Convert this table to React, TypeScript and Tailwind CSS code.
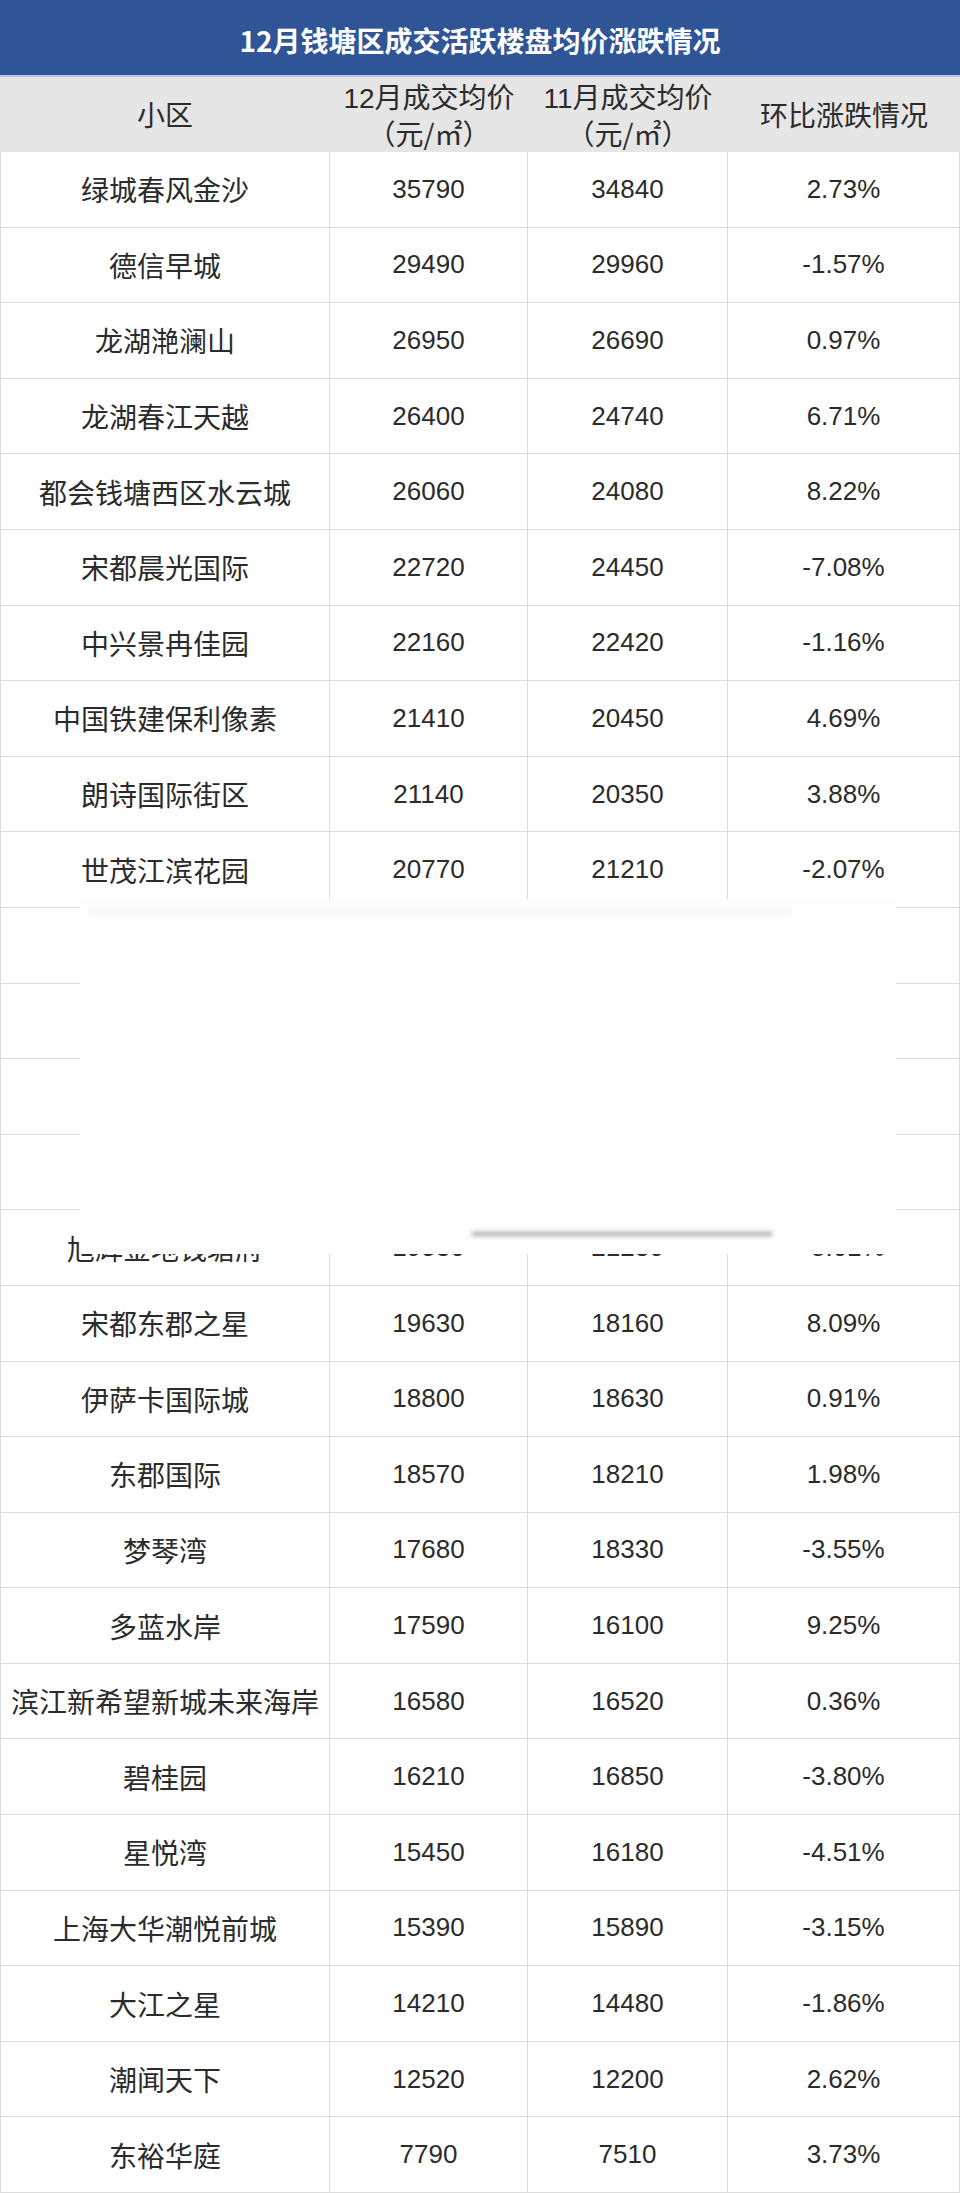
import React from 'react';

type Row = { name: string; dec: string; nov: string; change: string };

// 表格数据，按12月均价从高到低
const rows: Row[] = [
  { name: '绿城春风金沙', dec: '35790', nov: '34840', change: '2.73%' },
  { name: '德信早城', dec: '29490', nov: '29960', change: '-1.57%' },
  { name: '龙湖滟澜山', dec: '26950', nov: '26690', change: '0.97%' },
  { name: '龙湖春江天越', dec: '26400', nov: '24740', change: '6.71%' },
  { name: '都会钱塘西区水云城', dec: '26060', nov: '24080', change: '8.22%' },
  { name: '宋都晨光国际', dec: '22720', nov: '24450', change: '-7.08%' },
  { name: '中兴景冉佳园', dec: '22160', nov: '22420', change: '-1.16%' },
  { name: '中国铁建保利像素', dec: '21410', nov: '20450', change: '4.69%' },
  { name: '朗诗国际街区', dec: '21140', nov: '20350', change: '3.88%' },
  { name: '世茂江滨花园', dec: '20770', nov: '21210', change: '-2.07%' },
  { name: '', dec: '', nov: '', change: '' },
  { name: '', dec: '', nov: '', change: '' },
  { name: '', dec: '', nov: '', change: '' },
  { name: '', dec: '', nov: '', change: '' },
  { name: '旭辉金地钱塘府', dec: '19530', nov: '21230', change: '-8.01%' },
  { name: '宋都东郡之星', dec: '19630', nov: '18160', change: '8.09%' },
  { name: '伊萨卡国际城', dec: '18800', nov: '18630', change: '0.91%' },
  { name: '东郡国际', dec: '18570', nov: '18210', change: '1.98%' },
  { name: '梦琴湾', dec: '17680', nov: '18330', change: '-3.55%' },
  { name: '多蓝水岸', dec: '17590', nov: '16100', change: '9.25%' },
  { name: '滨江新希望新城未来海岸', dec: '16580', nov: '16520', change: '0.36%' },
  { name: '碧桂园', dec: '16210', nov: '16850', change: '-3.80%' },
  { name: '星悦湾', dec: '15450', nov: '16180', change: '-4.51%' },
  { name: '上海大华潮悦前城', dec: '15390', nov: '15890', change: '-3.15%' },
  { name: '大江之星', dec: '14210', nov: '14480', change: '-1.86%' },
  { name: '潮闻天下', dec: '12520', nov: '12200', change: '2.62%' },
  { name: '东裕华庭', dec: '7790', nov: '7510', change: '3.73%' },
];

const cjk = { fontFamily: '"Noto Sans CJK SC", "Noto Sans", sans-serif' };
const num = { fontFamily: '"Liberation Sans", Arial, "Noto Sans CJK SC", sans-serif' };

const cell = 'flex items-center justify-center border-r border-b border-[#dcdcdc] h-[75.6px] text-[#2b2b2b]';

export default function App() {
  return (
    <div className="relative w-[960px] bg-white">
      <div
        className="flex h-[75px] items-center justify-center bg-[#2f5597] pt-1 text-[28px] font-bold text-white"
        style={cjk}
      >
        12月钱塘区成交活跃楼盘均价涨跌情况
      </div>
      <div className="h-[2px] bg-[#b4c7e7]" />
      <div
        className="grid h-[75px] grid-cols-[330px_198px_200px_232px] bg-[#e7e6e6] text-[28px] leading-[35px] text-[#2b2b2b]"
        style={cjk}
      >
        <div className="flex items-center justify-center">小区</div>
        <div className="flex flex-col items-center justify-center">
          <span><span style={num}>12</span>月成交均价</span>
          <span>（元/㎡）</span>
        </div>
        <div className="flex flex-col items-center justify-center">
          <span><span style={num}>11</span>月成交均价</span>
          <span>（元/㎡）</span>
        </div>
        <div className="flex items-center justify-center">环比涨跌情况</div>
      </div>
      <div className="grid grid-cols-[330px_198px_200px_232px]">
        {rows.map((r, i) => (
          <React.Fragment key={i}>
            <div className={`${cell} border-l text-[28px]`} style={cjk}>
              {r.name}
            </div>
            <div className={`${cell} text-[26px]`} style={num}>
              {r.dec}
            </div>
            <div className={`${cell} text-[26px]`} style={num}>
              {r.nov}
            </div>
            <div className={`${cell} text-[26px]`} style={num}>
              {r.change}
            </div>
          </React.Fragment>
        ))}
      </div>
      {/* 遮挡块 */}
      <div className="absolute left-[80px] top-[899px] h-[355px] w-[816px] overflow-hidden bg-[#fdfdfd]">
        <div className="absolute left-[10px] top-[10px] h-[5px] w-[700px] bg-[#f3f3f3] blur-[3px]" />
        <div className="absolute left-[392px] top-[333px] h-[4px] w-[300px] bg-[#a8a8a8] blur-[2px]" />
      </div>
    </div>
  );
}
